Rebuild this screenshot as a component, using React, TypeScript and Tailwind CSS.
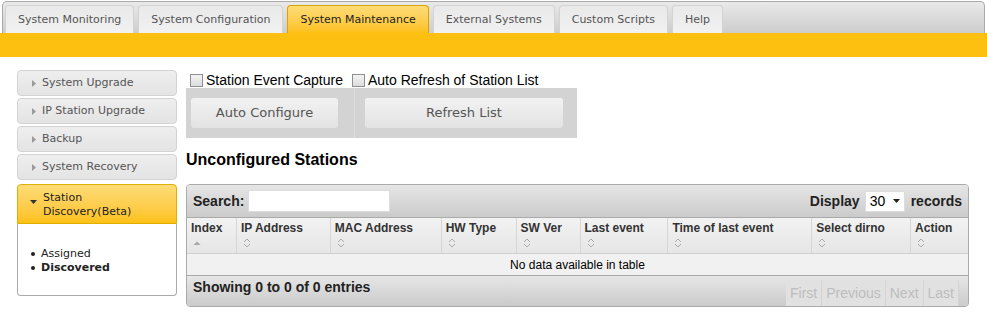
import React from "react";

const tabs = [
  "System Monitoring",
  "System Configuration",
  "System Maintenance",
  "External Systems",
  "Custom Scripts",
  "Help",
];

const side = ["System Upgrade", "IP Station Upgrade", "Backup", "System Recovery"];

const cols: { name: string; w: number; asc?: boolean }[] = [
  { name: "Index", w: 50, asc: true },
  { name: "IP Address", w: 94 },
  { name: "MAC Address", w: 111 },
  { name: "HW Type", w: 75 },
  { name: "SW Ver", w: 64 },
  { name: "Last event", w: 88 },
  { name: "Time of last event", w: 144 },
  { name: "Select dirno", w: 99 },
  { name: "Action", w: 57 },
];

function SortBoth() {
  return (
    <svg width="8" height="10" viewBox="0 0 8 10" className="block">
      <path d="M1 4 L4 1 L7 4" fill="none" stroke="#aaaaaa" strokeWidth="1" />
      <path d="M1 6 L4 9 L7 6" fill="none" stroke="#aaaaaa" strokeWidth="1" />
    </svg>
  );
}

function SortAsc() {
  return (
    <svg width="8" height="10" viewBox="0 0 8 10" className="block">
      <path d="M0.5 7 L4 3.5 L7.5 7 Z" fill="#a8a8a8" />
    </svg>
  );
}

export default function App() {
  const verdana = { fontFamily: '"DejaVu Sans", Verdana, sans-serif' };
  const arial = { fontFamily: '"Liberation Sans", Arial, sans-serif' };
  return (
    <div className="w-[987px] h-[323px] bg-white overflow-hidden" style={verdana}>
      {/* Tab bar */}
      <div className="mx-[2px] mt-[1px] h-[32px] border border-b-0 border-[#aaaaaa] rounded-t-[5px] bg-gradient-to-b from-[#e9e9e9] to-[#cdcdcd] flex items-end gap-[4px] pl-[2px]">
        {tabs.map((t) => {
          const active = t === "System Maintenance";
          return (
            <div
              key={t}
              className={
                "h-[28px] px-[12px] pt-[2px] flex items-center rounded-t-[4px] border border-b-0 text-[11px] " +
                (active
                  ? "border-[#d9a400] bg-gradient-to-b from-[#fedc75] to-[#fdc110] text-[#222]"
                  : "border-[#d3d3d3] bg-gradient-to-b from-[#e9e9e9] to-[#f1f1f1] text-[#555]")
              }
            >
              {t}
            </div>
          );
        })}
      </div>
      <div className="h-[24px] bg-[#fdc010]" />

      <div className="flex pt-[13px]">
        {/* Sidebar */}
        <div className="ml-[17px] w-[160px] flex flex-col gap-[2px]">
          {side.map((s) => (
            <div
              key={s}
              className="h-[26px] flex items-center border border-[#d3d3d3] rounded-[4px] bg-gradient-to-b from-[#eeeeee] to-[#e4e4e4] text-[11px] text-[#555]"
            >
              <svg width="4" height="7" viewBox="0 0 4 7" className="ml-[14px] mr-[6px]">
                <path d="M0 0 L4 3.5 L0 7 Z" fill="#9a9a9a" />
              </svg>
              {s}
            </div>
          ))}
          <div className="mt-[2px]">
            <div className="h-[40px] flex items-center border border-[#e0b000] rounded-t-[4px] bg-gradient-to-b from-[#fedc75] to-[#fdc110] text-[11px] text-[#222] leading-[14px]">
              <svg width="7" height="4" viewBox="0 0 7 4" className="ml-[12px] mr-[6px] self-center mt-[-4px]">
                <path d="M0 0 L7 0 L3.5 4 Z" fill="#333" />
              </svg>
              <div className="pt-[1px]">
                Station
                <br />
                Discovery(Beta)
              </div>
            </div>
            <div className="h-[72px] border border-t-0 border-[#aaaaaa] rounded-b-[4px] bg-white pt-[23px] text-[11px] text-[#222] leading-[14px]">
              <div className="flex items-center">
                <span className="ml-[13px] mr-[6px] w-[4px] h-[4px] rounded-full bg-[#222]" />
                Assigned
              </div>
              <div className="flex items-center font-bold">
                <span className="ml-[13px] mr-[6px] w-[4px] h-[4px] rounded-full bg-[#222]" />
                Discovered
              </div>
            </div>
          </div>
        </div>

        {/* Main */}
        <div className="ml-[9px] flex flex-col" style={arial}>
          <div className="flex items-center h-[18px] pt-[2px] text-[14px] text-black ml-[4px]">
            <span className="w-[13px] h-[13px] border border-[#8f8f8f] bg-gradient-to-b from-[#f4f4f4] to-[#dcdcdc] mr-[3px]" />
            <span>Station Event Capture</span>
            <span className="w-[13px] h-[13px] border border-[#8f8f8f] bg-gradient-to-b from-[#f4f4f4] to-[#dcdcdc] ml-[9px] mr-[3px]" />
            <span>Auto Refresh of Station List</span>
          </div>
          <div className="w-[391px] h-[50px] bg-[#d3d3d3] flex">
            <div className="w-[169px] h-full flex items-center pl-[5px] border-r border-[#dedede]">
              <div
                className="w-[147px] h-[30px] rounded-[3px] bg-gradient-to-b from-[#f2f2f2] to-[#e3e3e3] flex items-center justify-center text-[13px] text-[#555]"
                style={verdana}
              >
                Auto Configure
              </div>
            </div>
            <div className="flex-1 h-full flex items-center pl-[10px]">
              <div
                className="w-[198px] h-[30px] rounded-[3px] bg-gradient-to-b from-[#f2f2f2] to-[#e3e3e3] flex items-center justify-center text-[13px] text-[#555]"
                style={verdana}
              >
                Refresh List
              </div>
            </div>
          </div>
          <div className="mt-[14px] h-[16px] leading-[16px] text-[16px] font-bold text-black">
            Unconfigured Stations
          </div>

          {/* Table wrapper */}
          <div className="mt-[16px] w-[783px] border border-[#aaaaaa] rounded-[4px] overflow-hidden">
            <div className="h-[33px] bg-gradient-to-b from-[#e6e6e6] to-[#cbcbcb] flex items-center justify-between px-[6px] border-b border-[#aaaaaa]">
              <div className="flex items-center text-[14px] font-bold text-[#222]">
                Search:
                <span className="ml-[4px] w-[142px] h-[22px] bg-white border border-[#dcdcdc]" />
              </div>
              <div className="flex items-center text-[14px] font-bold text-[#222]">
                Display
                <span className="ml-[5px] mr-[6px] w-[40px] h-[21px] bg-white border border-[#dcdcdc] flex items-center justify-between pl-[4px] pr-[4px] font-normal text-[14px] text-black">
                  30
                  <svg width="7" height="4" viewBox="0 0 7 4">
                    <path d="M0 0 L7 0 L3.5 4 Z" fill="#222" />
                  </svg>
                </span>
                records
              </div>
            </div>
            <div className="flex h-[36px] bg-gradient-to-b from-[#f2f2f2] to-[#e6e6e6] border-b border-[#cfcfcf]">
              {cols.map((c, i) => (
                <div
                  key={c.name}
                  style={{ width: c.w }}
                  className={
                    "h-full flex flex-col pl-[4px] pt-[3px] " +
                    (i < cols.length - 1 ? "border-r border-[#d6d6d6]" : "")
                  }
                >
                  <div className="text-[12px] font-bold text-[#333] leading-[14px]">{c.name}</div>
                  <div className="mt-[3px] ml-[2px]">{c.asc ? <SortAsc /> : <SortBoth />}</div>
                </div>
              ))}
            </div>
            <div className="h-[22px] bg-[#f1f1f1] flex items-center justify-center text-[12px] text-black border-b border-[#aaaaaa]">
              No data available in table
            </div>
            <div className="h-[30px] bg-gradient-to-b from-[#e6e6e6] to-[#cbcbcb] flex justify-between px-[6px]">
              <div className="pt-[1px] text-[14px] font-bold text-[#222]">Showing 0 to 0 of 0 entries</div>
              <div className="flex items-end mr-[3px] text-[14px] text-[#bdbdbd]">
                {["First", "Previous", "Next", "Last"].map((p) => (
                  <div key={p} className="h-[26px] px-[4px] flex items-center bg-[#e1e1e1] border-r border-[#d4d4d4] rounded-t-[2px]">
                    {p}
                  </div>
                ))}
              </div>
            </div>
          </div>
        </div>
      </div>
    </div>
  );
}
